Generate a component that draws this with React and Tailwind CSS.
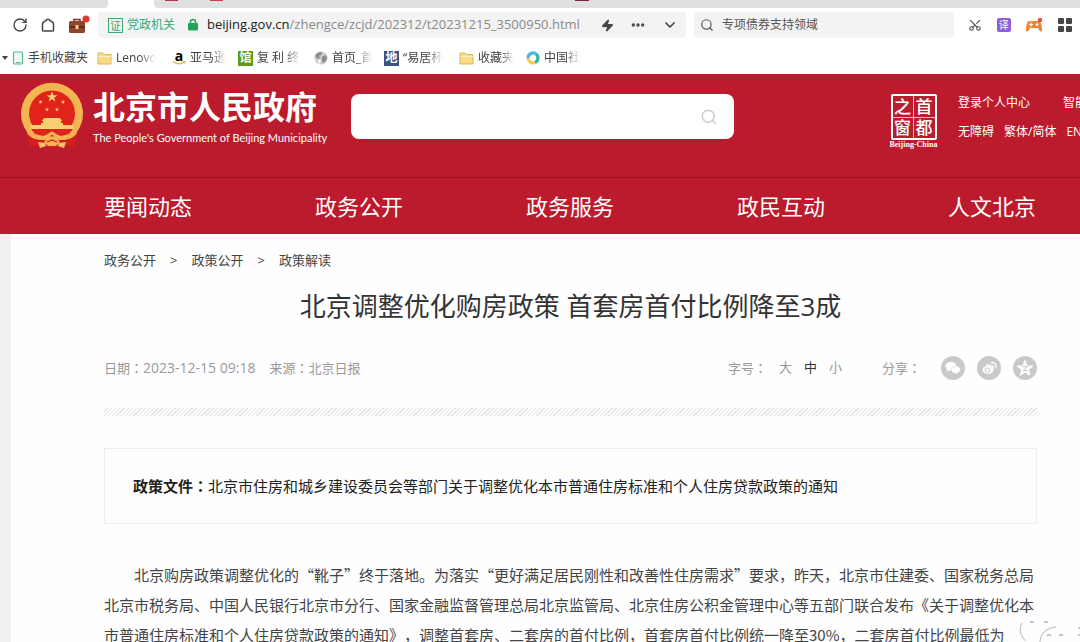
import { RotateCw, Zap, Ellipsis, ChevronDown, Search, Scissors } from "lucide-react";

const NAV = ["要闻动态", "政务公开", "政务服务", "政民互动", "人文北京"];
const CRUMBS = ["政务公开", "政策公开", "政策解读"];

const BOOKMARKS = [
  { label: "手机收藏夹", icon: <PhoneIcon />, left: "ml-1", box: "w-[61px]" },
  { label: "Lenovo", icon: <FolderIcon />, left: "ml-2", box: "w-[40px]", fade: true },
  { label: "亚马逊", icon: <AmazonIcon />, left: "ml-4", box: "w-[36px]", fade: true },
  { label: "复 利 终", icon: <BoxIcon bg="bg-[#5c9e1c]" text="馆" />, left: "ml-3", box: "w-[45px]", fade: true },
  { label: "首页_首", icon: <GlobeIcon />, left: "ml-3", box: "w-[40px]", fade: true },
  { label: "“易居杯", icon: <BoxIcon bg="bg-[#3c5382]" text="地" />, left: "ml-3", box: "w-[40px]", fade: true },
  { label: "收藏夹", icon: <FolderIcon />, left: "ml-4", box: "w-[36px]", fade: true },
  { label: "中国社", icon: <SwirlIcon />, left: "ml-3", box: "w-[36px]", fade: true },
];

function PhoneIcon() {
  return (
    <svg viewBox="0 0 12 14" className="h-3.5 w-3">
      <rect x="1.500" y="1" width="9" height="12" rx="1" fill="#eefaf4" stroke="#55b98d" strokeWidth="1.200" />
      <path d="M4 11.500h4" stroke="#55b98d" />
    </svg>
  );
}

function FolderIcon() {
  return (
    <svg viewBox="0 0 15 13" className="h-[13px] w-[15px]">
      <path d="M1 2.500V1h5l1.500 1.500H14V12H1z" fill="#f8db84" stroke="#dfb753" />
      <path d="M1 4.500h13" stroke="#fff0bd" />
    </svg>
  );
}

function AmazonIcon() {
  return (
    <span className="flex w-3.5 flex-col items-center">
      <b className="text-[14px] leading-[10px] text-black">a</b>
      <svg viewBox="0 0 14 4" className="h-1 w-3.5">
        <path d="M1 .5c4 3 8 3 11 .5M10.500 .500h2.500l-.8 2" fill="none" stroke="#efb14a" strokeWidth="1.200" />
      </svg>
    </span>
  );
}

function BoxIcon({ bg, text }) {
  return <span className={`${bg} flex h-[15px] w-[15px] items-center justify-center text-[12px] leading-none font-bold text-white`}>{text}</span>;
}

function GlobeIcon() {
  return (
    <svg viewBox="0 0 14 14" className="h-3.5 w-3.5">
      <circle cx="7" cy="7" r="6.500" fill="#c9c9c9" />
      <path d="M1 5c2-4 5-4 7-4L7 4 5 5l1 2-2 1zM8 6l4-2 1 4-3 4-2-2z" fill="#8b8b8b" />
      <path d="M4 8l3 1-1 4-2-1z" fill="#f5f5f5" />
    </svg>
  );
}

function SwirlIcon() {
  return (
    <svg viewBox="0 0 14 14" className="h-3.5 w-3.5" fill="none" strokeWidth="3.200">
      <path d="M2 7a5 5 0 0 1 8-4" stroke="#4db8e8" />
      <path d="M10 3a5 5 0 0 1-1 8.500" stroke="#35b5a4" />
      <path d="M9 11.500A5 5 0 0 1 2 7" stroke="#f0ce45" />
    </svg>
  );
}

function HomeIcon() {
  return (
    <svg viewBox="0 0 16 16" className="h-4 w-4" fill="none" stroke="#444" strokeWidth="1.500">
      <path d="M3.500 14q-1 0-1-1V7q0-1 .8-1.600L7 2.600q1-.7 2 0l3.700 2.800q.8.600.8 1.600v6q0 1-1 1z" />
    </svg>
  );
}

function BriefcaseIcon() {
  return (
    <svg viewBox="0 0 22 20" className="h-5 w-[22px]">
      <path d="M6 7V4.500h6V7" fill="none" stroke="#6e3522" strokeWidth="1.500" />
      <rect x="1" y="6" width="16" height="12" rx="1.500" fill="#8f4527" />
      <path d="M1 11h16v2H1z" fill="#632d1c" />
      <rect x="7.500" y="10" width="3" height="4" fill="#f0c9a0" />
      <circle cx="18" cy="4" r="3.600" fill="#db3a35" />
    </svg>
  );
}

function LockIcon() {
  return (
    <svg viewBox="0 0 12 14" className="h-3.5 w-3">
      <path d="M3.500 6V4a2.500 2.500 0 0 1 5 0v2" fill="none" stroke="#21a35c" strokeWidth="1.500" />
      <rect x="1" y="5" width="10" height="7.500" rx="1" fill="#21a35c" />
    </svg>
  );
}

function GamepadIcon() {
  return (
    <svg viewBox="0 0 18 16" className="h-4 w-[18px]">
      <path d="M4 4h10c2 0 3 6 3 9s-3 1-4-2H5c-1 3-4 5-4 2s1-9 3-9z" fill="#ef8533" />
      <path d="M4 7.500h4M6 5.500v4" stroke="#fff" strokeWidth="1.200" />
      <circle cx="12" cy="7.500" r="1.300" fill="#fff" />
      <circle cx="15" cy="3" r="2.200" fill="#e0513c" />
    </svg>
  );
}

function GridIcon() {
  return (
    <svg viewBox="0 0 14 14" className="h-3.5 w-3.5" fill="#444">
      <rect width="6" height="6" rx="1" />
      <rect x="8" width="6" height="6" rx="1" />
      <rect y="8" width="6" height="6" rx="1" />
      <rect x="8" y="8" width="6" height="6" rx="1" />
    </svg>
  );
}

const STAR = "M0-5 1.200-1.600 4.800-1.500 1.900.6 2.900 4 0 2-2.900 4-1.900.6-4.800-1.500-1.200-1.600z";

function Emblem() {
  return (
    <svg viewBox="0 0 64 68" className="h-[68px] w-16 shrink-0">
      <path d="M5 46l5 19 11-2 11 3 11-3 11 2 5-19z" fill="#d3201f" />
      <path d="M7 50A31 31 0 1 1 57 50L42 58H22z" fill="#f3b452" />
      <circle cx="32" cy="31.500" r="23" fill="#e2231a" />
      <g fill="#f9cf73">
        <path d={STAR} transform="translate(32 15) scale(1.150)" />
        <path d={STAR} transform="translate(20.500 20) scale(.45)" />
        <path d={STAR} transform="translate(43 20) scale(.45)" />
        <path d={STAR} transform="translate(27 27.500) scale(.45)" />
        <path d={STAR} transform="translate(37 27.500) scale(.45)" />
        <path d="M24 36h16l2 3h-1v2h2v2h10v4H11v-4h10v-2h2v-2h-1z" />
      </g>
      <path d="M11 47h42l-4 5-8 2-9-4-9 4-8-2z" fill="#dd241d" />
      <path d="M8 50c5 7 11 7 16 6l8-5 8 5c5 1 11 1 16-6" fill="none" stroke="#f3b452" strokeWidth="3" />
      <path d="M27 57h10l3 3-4 4h-8l-4-4z" fill="#f3b452" />
      <path d="M18 60l7 1 1 3-6 2zM46 60l-7 1-1 3 6 2z" fill="#f6c569" />
      <path d="M27 60l5-2 5 2" fill="none" stroke="#d3201f" strokeWidth="1.200" />
    </svg>
  );
}

function CapitalWindow() {
  return (
    <a href="#" className="flex w-[51px] shrink-0 flex-col items-center text-white">
      <span className="grid h-[46px] w-[46px] grid-cols-2 rounded-xs border-2 border-white text-[17px] font-medium">
        <span className="flex items-center justify-center border-r border-b border-white/70 leading-none">之</span>
        <span className="flex items-center justify-center border-b border-white/70 leading-none">首</span>
        <span className="flex items-center justify-center border-r border-white/70 leading-none">窗</span>
        <span className="flex items-center justify-center leading-none">都</span>
      </span>
      <span className="font-['Liberation_Serif',serif] text-[8px] leading-[9px] font-bold whitespace-nowrap">Beijing-China</span>
    </a>
  );
}

// centred full-width colon
function Colon() {
  return <span className="font-['Noto_Sans_CJK_TC',sans-serif]">：</span>;
}

function ShareButton({ label, children }) {
  return (
    <button type="button" aria-label={label} className="flex h-6 w-6 items-center justify-center rounded-full bg-[#c9c9c9]">
      <svg viewBox="0 0 24 24" className="h-6 w-6">{children}</svg>
    </button>
  );
}

function Browser() {
  return (
    <div className="bg-white">
      <div className="flex h-2">
        <div className="w-[108px] rounded-br-sm bg-[#e0e0e0]" />
        <div className="ml-[46px] flex flex-1 items-start rounded-bl-sm bg-[#e0e0e0] pl-[11px]">
          <span className="h-px w-[13px] bg-[#b8324a]" />
          <span className="ml-8 h-px w-[13px] bg-[#c43f55]" />
          <span className="ml-[352px] h-px w-[14px] bg-[#7c2335]" />
        </div>
      </div>

      <div className="flex h-[34px] items-center">
        <div className="flex w-[98px] shrink-0 items-center gap-3 pl-3 text-[#444]">
          <button type="button" aria-label="刷新"><RotateCw size={16} strokeWidth={2} /></button>
          <button type="button" aria-label="主页"><HomeIcon /></button>
          <button type="button" aria-label="工具箱"><BriefcaseIcon /></button>
        </div>
        <div className="flex h-[26px] min-w-0 flex-1 items-center rounded-sm bg-[#f3f3f3] pl-2.5 text-[13px] whitespace-nowrap">
          <span className="flex h-[15px] w-[15px] shrink-0 items-center justify-center border border-[#3aa873] text-[11px] leading-none text-[#3aa873]">证</span>
          <span className="ml-1 text-[12px] text-[#3aa873]">党政机关</span>
          <span className="mr-2 ml-3"><LockIcon /></span>
          <span className="text-[#8a8a8a]"><span className="text-[#222]">beijing.gov.cn</span>/zhengce/zcjd/202312/t20231215_3500950.html</span>
          <span className="mr-2 ml-auto flex items-center gap-4 text-[#444]">
            <Zap size={13} fill="currentColor" />
            <Ellipsis size={16} strokeWidth={3} />
            <ChevronDown size={16} strokeWidth={2.5} />
          </span>
        </div>
        <label className="ml-2 flex h-[26px] w-[260px] shrink-0 items-center gap-2 rounded-sm bg-[#f3f3f3] px-1.5 text-[#555]">
          <Search size={14} aria-hidden="true" />
          <input aria-label="搜索" defaultValue="专项债券支持领域" className="min-w-0 flex-1 text-[12px] outline-none" />
        </label>
        <div className="flex w-[126px] shrink-0 items-center justify-between pr-2 pl-3.5 text-[#555]">
          <button type="button" aria-label="截图"><Scissors size={14} className="-rotate-90" /></button>
          <button type="button" className="h-3.5 w-3.5 rounded-xs bg-[#8d5fdc] text-[10px] leading-none text-white">译</button>
          <button type="button" aria-label="游戏"><GamepadIcon /></button>
          <button type="button" aria-label="应用"><GridIcon /></button>
        </div>
      </div>

      <div className="flex h-8 items-center pl-0.5 text-[12px] text-[#444]">
        <span className="h-0 w-0 border-x-3 border-t-4 border-x-transparent border-t-[#444]" />
        {BOOKMARKS.map((b) => (
          <a key={b.label} href="#" className={`${b.left} flex items-center gap-1`}>
            {b.icon}
            <span className={`${b.box} overflow-hidden whitespace-nowrap ${b.fade ? "mask-r-from-60%" : ""}`}>{b.label}</span>
          </a>
        ))}
      </div>
    </div>
  );
}

function Header() {
  return (
    <header className="bg-[#bb1b2c] text-white">
      <div className="flex h-[103px] items-start overflow-hidden">
        <div className="flex w-[351px] shrink-0 pt-2 pl-5">
          <Emblem />
          <div className="pl-[9px] whitespace-nowrap">
            <h1 className="text-[32px] leading-[50px] font-bold">北京市人民政府</h1>
            <p className="font-['Lato',sans-serif] text-[11px] leading-3">The People's Government of Beijing Municipality</p>
          </div>
        </div>
        <label className="mt-5 flex h-[45px] max-w-[383px] flex-1 items-center rounded-lg bg-white pr-4">
          <input aria-label="站内搜索" className="min-w-0 flex-1 px-3 text-[#333] outline-none" />
          <Search size={18} className="text-[#cfcfcf]" aria-hidden="true" />
        </label>
        <div className="ml-auto flex w-[192px] shrink-0 pt-5">
          <CapitalWindow />
          <div className="ml-[19px] text-[12px] leading-[29px] whitespace-nowrap">
            <div className="-mt-1.5 flex gap-[33px]"><a href="#">登录个人中心</a><a href="#">智能</a></div>
            <div className="flex gap-2.5"><a href="#">无障碍</a><a href="#">繁体/简体</a><a href="#">EN</a></div>
          </div>
        </div>
      </div>
      <nav className="flex h-[57px] items-center justify-between border-t border-[#9d1525] pr-11 pl-[104px] text-[22px]">
        {NAV.map((n) => <a key={n} href="#">{n}</a>)}
      </nav>
    </header>
  );
}

function Article() {
  return (
    <main className="border-l-11 border-[#f0f0f0] bg-[#fefefe] pr-[43px] pl-[93px] text-[#444]">
      <div className="flex gap-3.5 pt-4 text-[13px] leading-5">
        {CRUMBS.map((c, i) => (
          <span key={c} className="flex gap-3.5">{i > 0 && <span>&gt;</span>}<a href="#">{c}</a></span>
        ))}
      </div>
      <h2 className="mt-4 text-center text-[26px] leading-[40px] text-[#333]">北京调整优化购房政策 首套房首付比例降至3成</h2>

      <div className="mt-[28px] flex h-7 items-center text-[13px] text-[#999]">
        <span>日期<Colon /><span className="text-[14px]">2023-12-15 09:18</span></span>
        <span className="ml-3.5">来源<Colon />北京日报</span>
        <span className="ml-auto">字号<Colon /></span>
        <button type="button" className="ml-3">大</button>
        <button type="button" className="ml-3 text-[#333]">中</button>
        <button type="button" className="ml-3">小</button>
        <span className="mr-5 ml-10">分享<Colon /></span>
        <div className="flex gap-3">
          <ShareButton label="微信">
            <path d="M10 6c-3.300 0-5.500 2-5.500 4.300 0 1.500.8 2.600 2 3.400l-.5 1.800 2-1c5 .8 7.500-1.500 7.500-4.200S13.300 6 10 6z" fill="#fff" />
            <path d="M15 10c-2.800 0-4.700 1.600-4.700 3.800S12.500 17.500 15 17.500l1.800.8-.2-1.300c1.500-.7 2.700-1.700 2.700-3.200 0-2.200-1.600-3.800-4.300-3.800z" fill="#fff" stroke="#c9c9c9" strokeWidth=".5" />
          </ShareButton>
          <ShareButton label="微博">
            <ellipse cx="11" cy="14" rx="5.500" ry="4" fill="#fff" />
            <circle cx="10.500" cy="14.200" r="2.300" fill="none" stroke="#c9c9c9" />
            <path d="M9 10c2-2 4-1 4 .500M14 9.500c2 0 2.500 1 2 3M14 6.500c4-.5 6 3 4.500 6" fill="none" stroke="#fff" strokeWidth="1.400" />
          </ShareButton>
          <ShareButton label="QQ空间">
            <path d={STAR} transform="translate(12 12.500) scale(1.600)" fill="#fff" stroke="#fff" strokeWidth=".8" strokeLinejoin="round" />
            <path d="M9.500 10.500h5l-4.500 4h4.500" fill="none" stroke="#c9c9c9" />
          </ShareButton>
        </div>
      </div>

      <div className="mt-[26px] h-2 bg-[repeating-linear-gradient(135deg,#fcfcfc_0_2px,#e4e4e4_2px_3px)]" />

      <div className="mt-8 border border-[#ededed] px-7 py-[22px] text-[15px] leading-[30px] text-[#222]">
        <b className="font-bold">政策文件<Colon /></b>
        <a href="#">北京市住房和城乡建设委员会等部门关于调整优化本市普通住房标准和个人住房贷款政策的通知</a>
      </div>

      <p className="mt-9 indent-[30px] font-['Noto_Sans_CJK_SC',sans-serif] text-[15px] leading-[30px] [text-spacing-trim:space-all]">
        北京购房政策调整优化的“靴子”终于落地。为落实“更好满足居民刚性和改善性住房需求”要求，昨天，北京市住建委、国家税务总局北京市税务局、中国人民银行北京市分行、国家金融监督管理总局北京监管局、北京住房公积金管理中心等五部门联合发布《关于调整优化本市普通住房标准和个人住房贷款政策的通知》，调整首套房、二套房的首付比例，首套房首付比例统一降至30%，二套房首付比例最低为
      </p>
    </main>
  );
}

// faint chat-bubble watermark over the page corner
function Watermark() {
  return (
    <svg viewBox="0 0 64 32" className="pointer-events-none absolute right-0 bottom-0 h-8 w-16" fill="none" stroke="#b5b5b5">
      <path d="M6 13c-4 7-1 14 4 18M24 32c0-8 6-14 16-15" />
      <path d="M14 13q2-3 4 0M28 13q2-3 4 0M31 26q2-3 4 0M43 26q2-3 4 0M62 18h2M62 25h2" strokeWidth="1.300" />
    </svg>
  );
}

export default function App() {
  return (
    <div className="relative h-screen overflow-hidden font-['Open_Sans','Noto_Sans_CJK_SC',sans-serif]">
      <Browser />
      <Header />
      <Article />
      <Watermark />
    </div>
  );
}
